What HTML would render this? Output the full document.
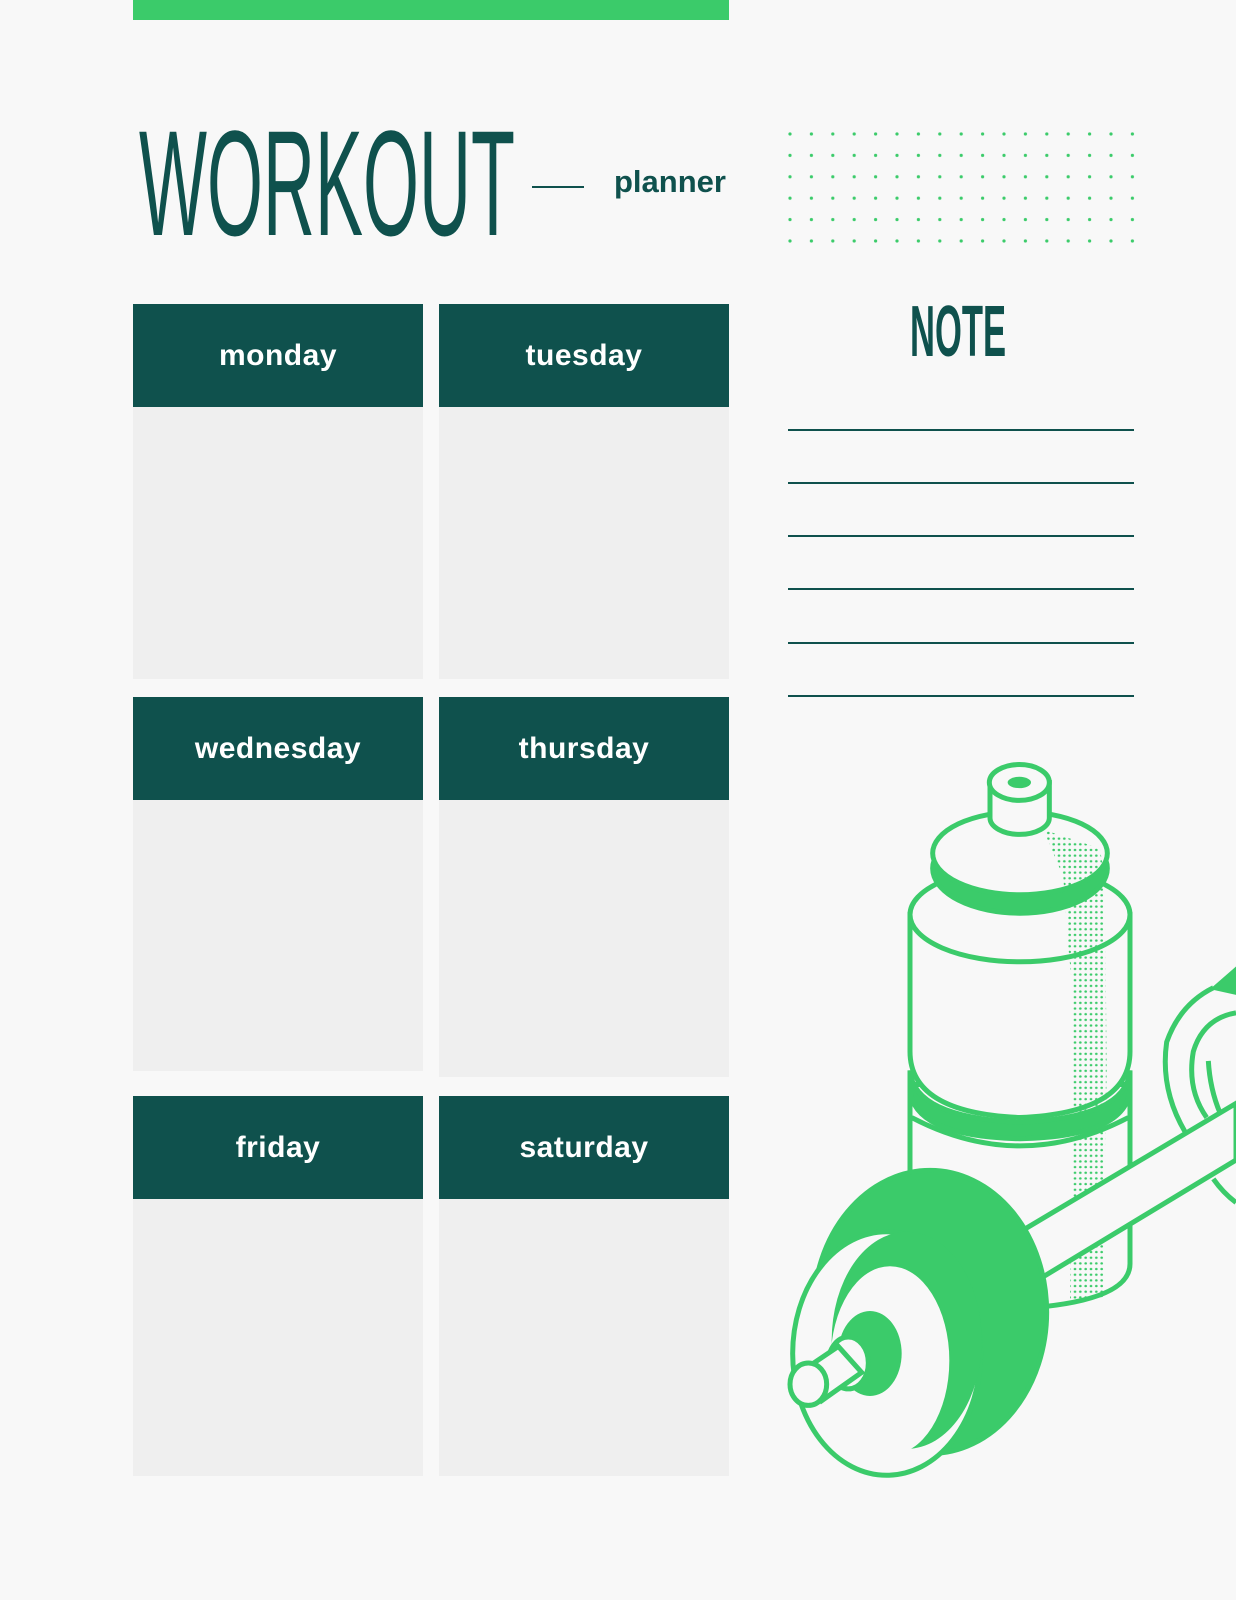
<!DOCTYPE html>
<html><head><meta charset="utf-8"><style>
html,body{margin:0;padding:0}
body{width:1236px;height:1600px;background:#f8f8f8;position:relative;overflow:hidden;font-family:"Liberation Sans",sans-serif}
.bar{position:absolute;left:133px;top:0;width:596px;height:20px;background:#3bcb6a}
.title{position:absolute;left:139px;top:108px;font-family:"Liberation Sans",sans-serif;font-size:150px;line-height:150px;color:#0f514d;transform:scaleX(0.48);transform-origin:left top;white-space:nowrap}
.dash{position:absolute;left:532px;top:186px;width:52px;height:2px;background:#0f514d}
.planner{position:absolute;left:614px;top:164px;font-size:31px;font-weight:bold;color:#0f514d}
.card{position:absolute;width:290px;background:#efefef}
.card .h{height:103px;background:#0f514d;color:#fff;font-size:30px;font-weight:bold;letter-spacing:0.5px;display:flex;align-items:center;justify-content:center}
.note{position:absolute;left:910px;top:296px;font-family:"Liberation Sans",sans-serif;font-weight:bold;font-size:72px;line-height:72px;color:#0f514d;transform:scaleX(0.48);transform-origin:left top}
.ln{position:absolute;left:788px;width:346px;height:2px;background:#0f514d}
</style></head><body>
<div class="bar"></div>
<div class="title">WORKOUT</div>
<div class="dash"></div>
<div class="planner">planner</div>
<svg style="position:absolute;left:786px;top:130px" width="352" height="116">
<defs><pattern id="dg" width="21.4" height="21.4" patternUnits="userSpaceOnUse"><circle cx="4" cy="4" r="1.6" fill="#3bcb6a"/></pattern></defs>
<rect width="352" height="116" fill="url(#dg)"/></svg>

<div class="card" style="left:133px;top:304px;height:375px"><div class="h">monday</div></div>
<div class="card" style="left:439px;top:304px;height:375px"><div class="h">tuesday</div></div>
<div class="card" style="left:133px;top:697px;height:374px"><div class="h">wednesday</div></div>
<div class="card" style="left:439px;top:697px;height:380px"><div class="h">thursday</div></div>
<div class="card" style="left:133px;top:1096px;height:380px"><div class="h">friday</div></div>
<div class="card" style="left:439px;top:1096px;height:380px"><div class="h">saturday</div></div>

<div class="note">NOTE</div>
<div class="ln" style="top:429px"></div>
<div class="ln" style="top:482px"></div>
<div class="ln" style="top:535px"></div>
<div class="ln" style="top:588px"></div>
<div class="ln" style="top:642px"></div>
<div class="ln" style="top:695px"></div>

<svg style="position:absolute;left:780px;top:740px" width="456" height="740" viewBox="0 0 1368 1568" preserveAspectRatio="none">
<defs><pattern id="dp" width="16" height="12" patternUnits="userSpaceOnUse"><ellipse cx="5" cy="5" rx="4" ry="2.5" fill="#3bcb6a"/></pattern></defs>
<g stroke="#3bcb6a" stroke-width="5" vector-effect="non-scaling-stroke" fill="#f8f8f8">
<path vector-effect="non-scaling-stroke" d="M390,730 L390,1110 Q390,1190 720,1205 Q1050,1190 1050,1110 L1050,730 Z"/>
<path vector-effect="non-scaling-stroke" d="M395,800 Q720,920 1045,800" fill="none"/>
<path vector-effect="non-scaling-stroke" d="M390,370 L390,660 Q390,790 720,800 Q1050,790 1050,660 L1050,370 Z"/>
<path vector-effect="non-scaling-stroke" d="M390,700 Q400,800 720,810 Q1040,800 1050,700 L1050,740 Q1040,840 720,845 Q400,840 390,740 Z" fill="#3bcb6a"/>
<ellipse vector-effect="non-scaling-stroke" cx="720" cy="370" rx="330" ry="100"/>
<ellipse vector-effect="non-scaling-stroke" cx="720" cy="272" rx="262" ry="95" fill="#3bcb6a"/>
<ellipse vector-effect="non-scaling-stroke" cx="720" cy="240" rx="262" ry="88"/>
<path vector-effect="non-scaling-stroke" d="M630,90 L630,165 A89,35 0 0 0 808,165 L808,90 Z"/>
<ellipse vector-effect="non-scaling-stroke" cx="718" cy="90" rx="90" ry="38"/>
<ellipse cx="718" cy="90" rx="35" ry="12" fill="#3bcb6a" stroke="none"/>
<path stroke="none" fill="url(#dp)" d="M790,190 L850,290 L860,400 L880,550 L880,750 L870,1190 L970,1180 L980,700 L975,300 L960,230 Z"/>
<path vector-effect="non-scaling-stroke" fill="none" d="M1300,525 Q1200,560 1160,640 Q1140,740 1215,830"/>
<path stroke="none" fill="#3bcb6a" d="M1290,528 L1368,480 L1368,540 Z"/>
<path vector-effect="non-scaling-stroke" fill="none" d="M1368,578 Q1270,590 1240,660 Q1220,740 1280,800"/>
<path vector-effect="non-scaling-stroke" fill="none" d="M1285,680 Q1290,740 1320,790"/>
<path vector-effect="non-scaling-stroke" fill="none" d="M1300,930 Q1330,960 1368,980"/>
<path vector-effect="non-scaling-stroke" d="M690,1055 L1368,770 L1368,890 L760,1150 Z"/>
<ellipse vector-effect="non-scaling-stroke" cx="450" cy="1212" rx="350" ry="300" fill="#3bcb6a"/>
<ellipse vector-effect="non-scaling-stroke" cx="320" cy="1300" rx="282" ry="258"/>
<ellipse cx="380" cy="1272" rx="225" ry="230" fill="#3bcb6a" stroke="none"/>
<ellipse cx="330" cy="1315" rx="178" ry="200" fill="#f8f8f8" stroke="none"/>
<ellipse cx="270" cy="1300" rx="95" ry="90" fill="#3bcb6a" stroke="none"/>
<ellipse vector-effect="non-scaling-stroke" cx="205" cy="1320" rx="60" ry="55"/>
<path vector-effect="non-scaling-stroke" d="M70,1335 L175,1285 L245,1340 L125,1400 Z"/>
<ellipse vector-effect="non-scaling-stroke" cx="85" cy="1365" rx="55" ry="45"/>
</g></svg>
</body></html>
